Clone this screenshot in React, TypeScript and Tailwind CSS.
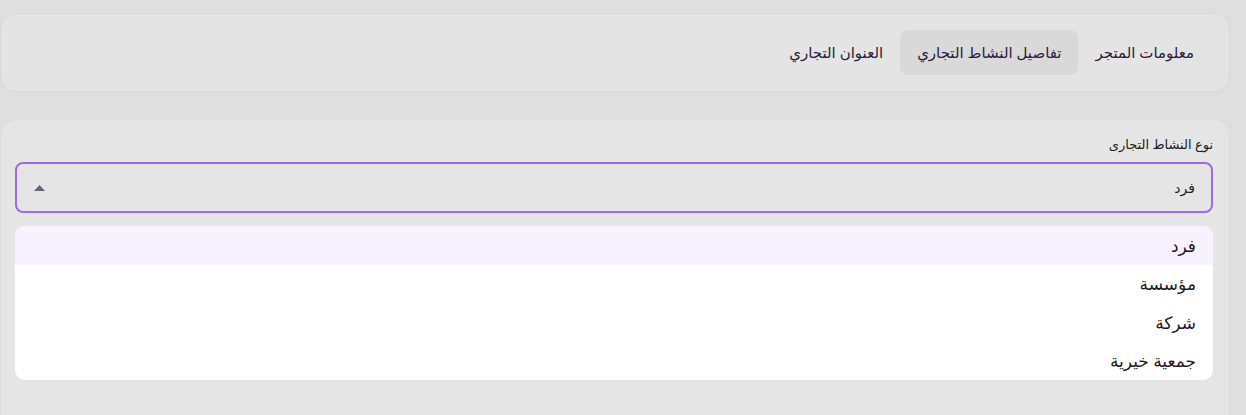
import React from "react";

const TABS = ["معلومات المتجر", "تفاصيل النشاط التجاري", "العنوان التجاري"];
const OPTIONS = ["فرد", "مؤسسة", "شركة", "جمعية خيرية"];

export default function App() {
  return (
    <div
      dir="rtl"
      className="min-h-[415px] bg-[#dedede] pt-[13px] pr-4 text-[#2b1d3d]"
      style={{ fontFamily: '"Noto Sans", "DejaVu Sans", sans-serif' }}
    >
      <div className="w-[1230px] rounded-2xl border border-[#d9d9d9] bg-[#e4e4e4] px-[18px] py-[16px]">
        <div className="flex items-center">
          {TABS.map((tab, i) => (
            <button
              key={tab}
              className={`h-[45px] rounded-lg px-[17px] text-[15px] ${
                i === 1 ? "bg-[#d9d9d9]" : ""
              }`}
            >
              {tab}
            </button>
          ))}
        </div>
      </div>

      <div className="mt-[27px] h-[300px] w-[1230px] rounded-t-2xl border border-[#dcdcdc] bg-[#e5e5e5] pr-[16px] pl-[14px] pt-[15px]">
        <label className="block text-[13px] leading-[19px] text-[#222]">نوع النشاط التجارى</label>
        <div className="mt-[8px] flex h-[51px] items-center justify-between rounded-lg border-2 border-[#9c6ae6] pr-[16px] pl-[17px]">
          <span className="text-[14px] text-[#222]">فرد</span>
          <svg width="11" height="6" viewBox="0 0 11 6">
            <path d="M0 6 L5.5 0 L11 6 Z" fill="#6b6078" />
          </svg>
        </div>
        <ul className="mt-[13px] overflow-hidden rounded-[10px] bg-white">
          {OPTIONS.map((opt, i) => (
            <li
              key={opt}
              className={`flex h-[38.5px] items-center pr-[17px] text-[17px] text-[#1f1a24] ${
                i === 0 ? "bg-[#f7f2fd]" : ""
              }`}
            >
              {opt}
            </li>
          ))}
        </ul>
      </div>
    </div>
  );
}
